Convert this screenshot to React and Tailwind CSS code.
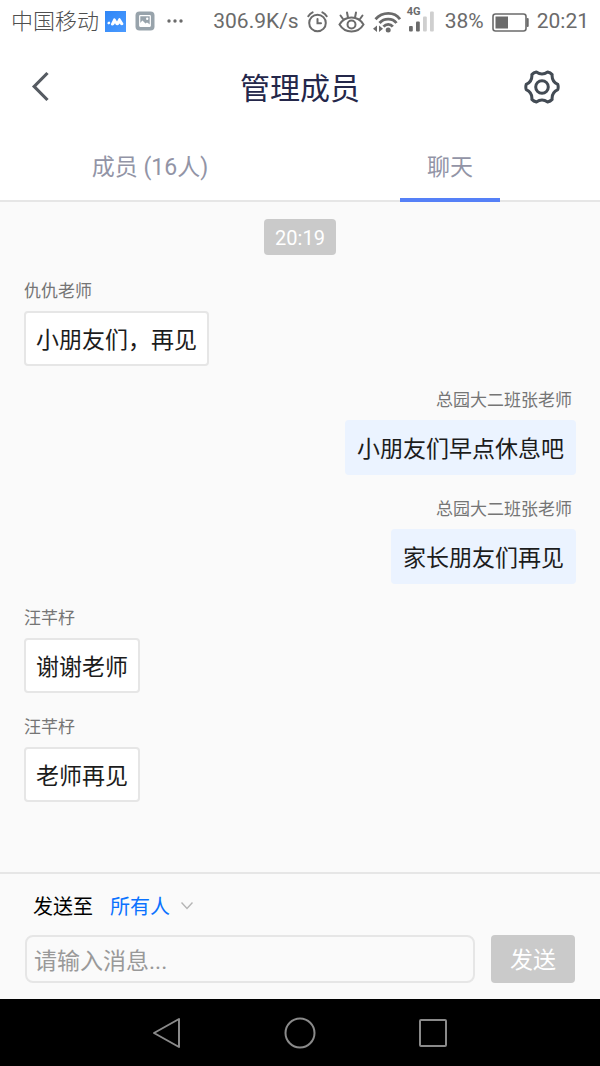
import { useState } from "react";

const messages = [
  { id: 1, sender: "仇仇老师", text: "小朋友们，再见", mine: false },
  { id: 2, sender: "总园大二班张老师", text: "小朋友们早点休息吧", mine: true },
  { id: 3, sender: "总园大二班张老师", text: "家长朋友们再见", mine: true },
  { id: 4, sender: "汪芊杍", text: "谢谢老师", mine: false },
  { id: 5, sender: "汪芊杍", text: "老师再见", mine: false },
];

const tabs = [
  { id: "members", label: "成员 (16人)" },
  { id: "chat", label: "聊天" },
];

function StatusBar() {
  return (
    <div className="flex h-[42px] items-center justify-between bg-white px-[11px] text-[21px] text-[#6b6b6b]">
      <div className="flex items-center gap-[6px]">
        <span className="text-[22px] font-light text-[#4f4f4f]">中国移动</span>
        <svg className="h-[21px] w-[21px]" viewBox="0 0 21 21">
          <defs>
            <linearGradient id="appBlue" x1="0" y1="0" x2="1" y2="1">
              <stop offset="0" stopColor="#2f86f6" />
              <stop offset="1" stopColor="#4b9bff" />
            </linearGradient>
          </defs>
          <rect width="21" height="21" fill="url(#appBlue)" />
          <path d="M2.300 12.600Q2.300 11.200 4 10.500 5.600 10.600 5.200 12.600 3.800 14.200 2.300 12.600zM6 12.800 8.600 7.600Q9.600 6.600 10.500 8L12 10.600 13.600 7.600Q14.600 6.400 15.600 8L18.400 12.400Q18.600 14 17 14.200 15.600 14.400 14.600 12.600 13.600 14.600 12 14.200 10.600 14 10 12.200L9 13.800Q7.800 15 6.400 14.200 5.600 13.800 6 12.800z" fill="#fff" />
        </svg>
        <svg className="ml-[3px] h-5 w-5" viewBox="0 0 20 20">
          <rect x="0.500" y="0.500" width="19" height="19" rx="4" fill="#98a3ab" />
          <rect x="4.700" y="4.700" width="10.600" height="10.600" rx="0.500" fill="none" stroke="#fff" strokeWidth="1.200" />
          <path d="M5 12l2.500-2.500 3 3 1.500-1 3 2V15H5z" fill="#fff" />
          <circle cx="12.200" cy="7.800" r="1.200" fill="#fff" />
        </svg>
        <svg className="ml-[5px] h-5 w-[18px]" viewBox="0 0 18 20" fill="currentColor">
          <circle cx="3" cy="10" r="1.700" />
          <circle cx="9" cy="10" r="1.700" />
          <circle cx="15" cy="10" r="1.700" />
        </svg>
      </div>

      <div className="flex items-center gap-2 pt-0.5">
        <span>306.9K/s</span>
        {/* alarm */}
        <svg className="h-[22px] w-[21px]" viewBox="0 0 21 22" fill="none" stroke="currentColor" strokeWidth="2" strokeLinecap="round">
          <circle cx="10.500" cy="12" r="8.300" />
          <path d="M10.500 8v4.300h3.500M1.300 5.200C2.400 3.400 3.800 2.200 5.600 1.400M19.700 5.200c-1.100-1.800-2.500-3-4.300-3.800" />
        </svg>
        {/* eye comfort */}
        <svg className="ml-0.5 h-[22px] w-[27px]" viewBox="0 0 27 22" fill="none" stroke="currentColor" strokeWidth="2" strokeLinecap="round">
          <path d="M1.500 13.500C4.500 8.500 8.500 6.500 13.500 6.500S22.500 8.500 25.500 13.500C22.500 18.500 18.500 20.500 13.500 20.500S4.500 18.500 1.500 13.500z" />
          <circle cx="13.500" cy="13.500" r="4" />
          <path d="M2.500 4.500l2.500 3.500M9 1.500l1 5M18 1.500l-1 5M24.500 4.500l-2.500 3.500" />
        </svg>
        {/* wifi */}
        <svg className="h-[22px] w-7" viewBox="0 0 28 22" fill="none" stroke="currentColor" strokeWidth="2.800">
          <path d="M2.500 8.300C9.500 .5 21.500 .5 27 8.300M6.500 12C11 6.800 19.500 6.800 23.500 12M10.500 15.600c2.500-3 7-3 9.300 0" />
          <circle cx="15.200" cy="19" r="2.500" fill="currentColor" stroke="none" />
          <path d="M4 14.500v6.500L0 17.800zM6 14.500v6.500l4-3.200z" fill="currentColor" stroke="none" />
        </svg>
        <div className="relative -ml-0.5 h-6 w-[28px]">
          <span className="absolute -top-1 left-0 text-[11px] leading-3 font-bold">4G</span>
          <svg className="h-6 w-[28px]" viewBox="0 0 28 24" fill="currentColor">
            <rect x="2" y="16" width="3.800" height="5.500" rx="1" />
            <rect x="9" y="11.500" width="3.800" height="10" rx="1" />
            <rect x="16" y="6.500" width="3.800" height="15" rx="1" fill="#cfcfcf" />
            <rect x="23" y="1.500" width="3.800" height="20" rx="1" fill="#cfcfcf" />
          </svg>
        </div>
        <span className="ml-0.5">38%</span>
        <svg className="h-[19px] w-[37px]" viewBox="0 0 37 19" fill="currentColor">
          <rect x="1" y="1" width="33" height="17" rx="2.500" fill="none" stroke="currentColor" strokeWidth="1.600" />
          <rect x="3.500" y="3.500" width="12.500" height="12" />
          <rect x="34.500" y="5" width="2.200" height="9" rx="1" />
        </svg>
        <span>20:21</span>
      </div>
    </div>
  );
}

function Header() {
  return (
    <header className="grid h-[90px] grid-cols-[1fr_auto_1fr] items-center bg-white pr-[38px] pl-[19px]">
      <button type="button" aria-label="返回" className="flex h-10 w-10 items-center justify-center text-[#565b62]">
        <svg className="h-8 w-8" viewBox="0 0 32 32" fill="none" stroke="currentColor" strokeWidth="3.200">
          <path d="M24.500 2 11.200 15.500 24.500 29" />
        </svg>
      </button>
      <h1 className="pt-0.5 pl-[19px] text-[30px] text-[#24274a]">管理成员</h1>
      <button type="button" aria-label="设置" className="flex h-10 w-10 items-center justify-center justify-self-end text-[#434b54]">
        <svg className="h-9 w-9" viewBox="-18 -18 36 36" fill="none" stroke="currentColor" strokeWidth="3" strokeLinejoin="round">
          <path d="M15.800-2.600Q16.600 0 15.800 2.600 9.500 5.500 10.150 12.380 8.300 14.400 5.650 14.980 0 11-5.650 14.980-8.300 14.400-10.150 12.380-9.500 5.500-15.800 2.600-16.600 0-15.800-2.600-9.500-5.500-10.150-12.380-8.300-14.400-5.650-14.980 0-11 5.650-14.980 8.300-14.400 10.150-12.380 9.500-5.500 15.800-2.600z" />
          <circle r="6.300" />
        </svg>
      </button>
    </header>
  );
}

function Message({ sender, text, mine }) {
  return (
    <li className={mine ? "flex flex-col items-end" : "flex flex-col items-start"}>
      <span className={mine ? "mr-1 text-[17px] leading-6 text-[#757575]" : "text-[17px] leading-6 text-[#757575]"}>
        {sender}
      </span>
      <p
        className={
          mine
            ? "mt-2 rounded border-2 border-[#ebf3ff] bg-[#ebf3ff] px-[10px] pt-[10px] pb-[6px] text-[23px] leading-[35px] text-[#1c1c1c]"
            : "mt-2 rounded border-2 border-[#e6e6e6] bg-white px-[10px] pt-[10px] pb-[6px] text-[23px] leading-[35px] text-[#1c1c1c]"
        }
      >
        {text}
      </p>
    </li>
  );
}

function Composer() {
  const [draft, setDraft] = useState("");

  return (
    <form
      className="border-t-2 border-[#e6e6e6] bg-[#fafafa] px-[25px] pt-[18px] pb-4"
      onSubmit={(e) => {
        e.preventDefault();
        setDraft("");
      }}
    >
      <div className="flex h-[30px] items-center pl-2 text-[20px]">
        <label htmlFor="recipient" className="text-black">发送至</label>
        <div className="ml-[17px] flex items-center gap-[11px]">
          <select id="recipient" className="appearance-none bg-transparent text-[#0b72ff] outline-none">
            <option>所有人</option>
          </select>
          <svg className="pointer-events-none h-3 w-3" viewBox="0 0 12 12" fill="none" stroke="#b5b5b5" strokeWidth="1.400">
            <path d="M.5 1.500 6 7.500l5.500-6" />
          </svg>
        </div>
      </div>
      <div className="mt-[13px] flex gap-4">
        <input
          type="text"
          aria-label="消息"
          placeholder="请输入消息..."
          value={draft}
          onChange={(e) => setDraft(e.target.value)}
          className="h-12 min-w-0 flex-1 rounded-lg border-2 border-[#e6e6e6] bg-transparent px-[7px] pt-1 text-[23px] text-[#1c1c1c] outline-none placeholder:text-[#999999]"
        />
        <button type="submit" className="h-12 w-[84px] rounded bg-[#cacaca] pt-1 text-[23px] text-white">
          发送
        </button>
      </div>
    </form>
  );
}

function NavBar() {
  return (
    <nav className="flex h-[67px] items-center justify-center gap-[101px] bg-black text-[#8a8a8a]">
      <button type="button" aria-label="后退">
        <svg className="h-8 w-8" viewBox="0 0 32 32" fill="none" stroke="currentColor" strokeWidth="2" strokeLinejoin="round">
          <path d="M28 2v28L3 16z" />
        </svg>
      </button>
      <button type="button" aria-label="主页">
        <svg className="h-8 w-8" viewBox="0 0 32 32" fill="none" stroke="currentColor" strokeWidth="2">
          <circle cx="16" cy="16" r="14.500" />
        </svg>
      </button>
      <button type="button" aria-label="最近任务">
        <svg className="h-8 w-8" viewBox="0 0 32 32" fill="none" stroke="currentColor" strokeWidth="2">
          <rect x="3" y="3" width="26" height="26" rx="1" />
        </svg>
      </button>
    </nav>
  );
}

export default function App() {
  const [active, setActive] = useState("chat");

  return (
    <div className="flex min-h-screen flex-col bg-[#fafafa] font-[Roboto,'Noto_Sans_CJK_SC',sans-serif]">
      <StatusBar />
      <Header />

      {/* Tabs */}
      <div role="tablist" className="flex h-[70px] border-b-2 border-[#e6e6e6] bg-white">
        {tabs.map((tab) => (
          <button
            key={tab.id}
            type="button"
            role="tab"
            aria-selected={active === tab.id}
            onClick={() => setActive(tab.id)}
            className="relative flex flex-1 items-center justify-center pt-1 text-[23px] text-[#9294a6]"
          >
            {tab.label}
            {active === tab.id && (
              <span className="absolute -bottom-0.5 left-1/2 h-1 w-[100px] -translate-x-1/2 bg-[#5580f7]" />
            )}
          </button>
        ))}
      </div>

      {/* Messages */}
      <main className="flex-1 px-6 pt-[17px]">
        <div className="flex justify-center">
          <time className="rounded bg-[#cacaca] px-[11px] pt-0.5 text-[20px] leading-[34px] text-white">20:19</time>
        </div>
        <ul className="mt-6 flex flex-col gap-[22px]">
          {messages.map((m) => (
            <Message key={m.id} sender={m.sender} text={m.text} mine={m.mine} />
          ))}
        </ul>
      </main>

      <Composer />
      <NavBar />
    </div>
  );
}
